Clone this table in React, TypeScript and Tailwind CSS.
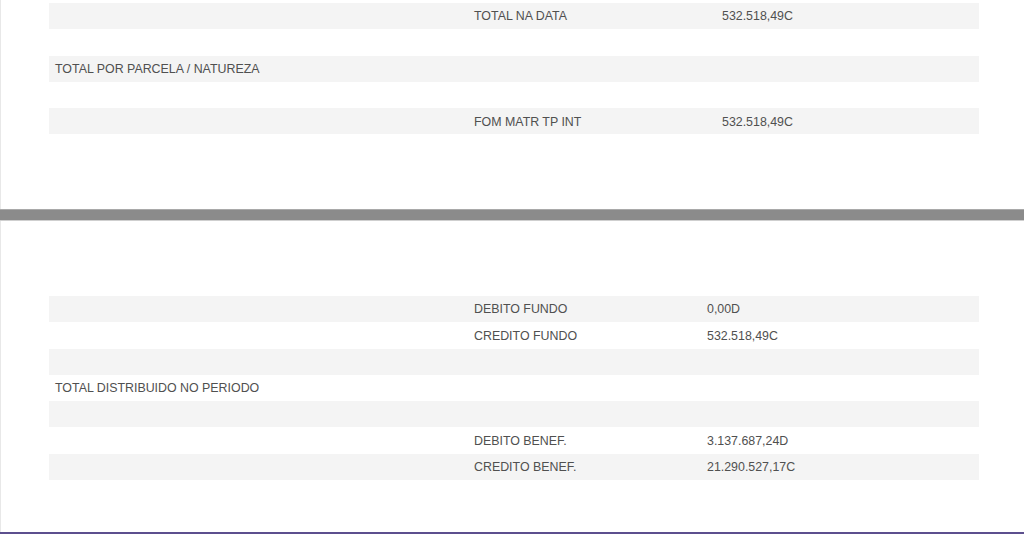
type Row = { a?: string; b?: string; c?: string };

const top: Row[] = [
    { b: "TOTAL NA DATA", c: "532.518,49C" },
    {},
    { a: "TOTAL POR PARCELA / NATUREZA" },
    {},
    { b: "FOM MATR TP INT", c: "532.518,49C" },
];

const bottom: Row[] = [
    { b: "DEBITO FUNDO", c: "0,00D" },
    { b: "CREDITO FUNDO", c: "532.518,49C" },
    {},
    { a: "TOTAL DISTRIBUIDO NO PERIODO" },
    {},
    { b: "DEBITO BENEF.", c: "3.137.687,24D" },
    { b: "CREDITO BENEF.", c: "21.290.527,17C" },
];

const Table = ({ rows, cols }: { rows: Row[]; cols: string }) => {
    return (
        <div className="w-[930px] flex flex-col">
            {rows.map((r, i) => (
                <div
                    key={i}
                    className={`grid ${cols} h-[26.3px] items-center pt-px text-[12.4px] text-[#505050] ${i % 2 === 0 ? "bg-[#f4f4f4]" : "bg-white"}`}
                >
                    <span className="px-[6px] whitespace-nowrap">{r.a}</span>
                    <span className="px-[6px] whitespace-nowrap">{r.b}</span>
                    <span className="px-[6px] whitespace-nowrap">{r.c}</span>
                </div>
            ))}
        </div>
    );
};

export default function App() {
    return (
        <div
            className="w-[1024px] h-[534px] overflow-hidden bg-white flex flex-col"
            style={{ fontFamily: '"Liberation Sans", Arial, sans-serif' }}
        >
            <div className="h-[209px] shrink-0 border-l border-[#e8e8e8] pl-[48px] pt-[3px]">
                <Table rows={top} cols="grid-cols-[419px_248px_263px]" />
            </div>
            <div className="h-[12px] shrink-0 bg-[#8b8b8b] border-t border-[#a9a9a9] border-b border-b-[#cfcfcf]" />
            <div className="flex-1 border-l border-[#e8e8e8] pl-[48px] pt-[75px]">
                <Table rows={bottom} cols="grid-cols-[419px_233px_278px]" />
            </div>
            <div className="h-[2px] shrink-0 bg-[#5c4f8e]" />
        </div>
    );
}
